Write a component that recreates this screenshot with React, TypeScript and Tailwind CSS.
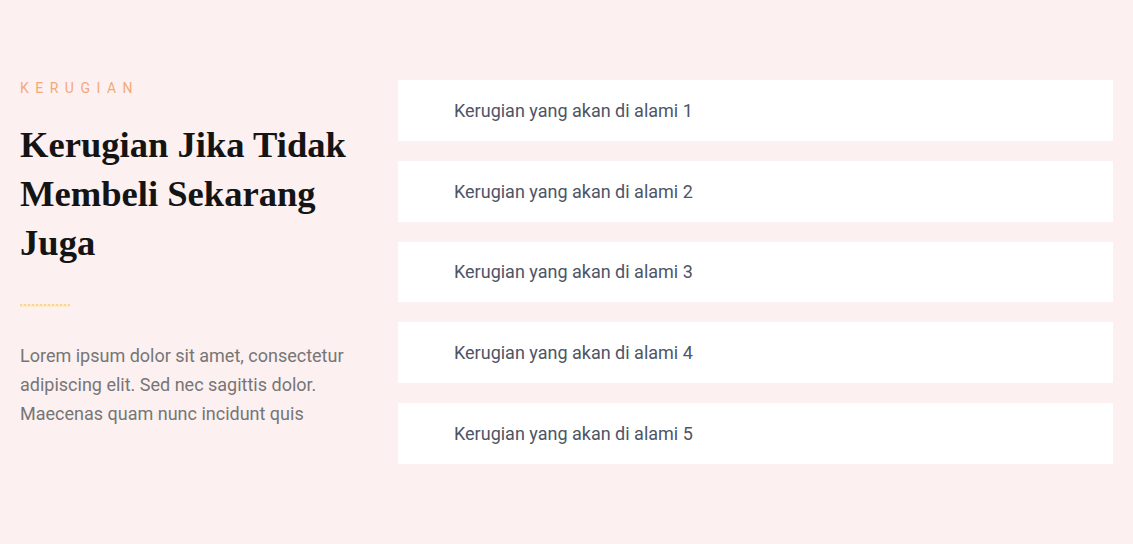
import React from 'react';

const items = [1, 2, 3, 4, 5];

export default function App() {
  return (
    <div className="min-h-screen w-full bg-[#fdf0f0] font-['Roboto',sans-serif]">
      <div className="flex px-5 pt-[80px] gap-5">
        <div className="w-[358px] shrink-0">
          <p className="text-[14px] leading-4 tracking-[6.5px] text-[#f3a978] uppercase">Kerugian</p>
          <h2 className="mt-[24px] font-['Liberation_Serif',serif] font-bold text-[36.6px] leading-[49px] text-[#141414]">
            Kerugian Jika Tidak Membeli Sekarang Juga
          </h2>
          <div className="mt-[37px] w-[50px] h-[3px] bg-[#fdeacb] border-t-2 border-dotted border-[#f8d49e]" />
          <p className="mt-[34px] text-[18px] leading-[29px] text-[#767676]">
            Lorem ipsum dolor sit amet, consectetur adipiscing elit. Sed nec sagittis dolor. Maecenas quam nunc incidunt quis
          </p>
        </div>
        <div className="flex-1 flex flex-col gap-5">
          {items.map((n) => (
            <div key={n} className="h-[60.75px] bg-white flex items-center pl-[56px]">
              <span className="text-[18px] text-[#4d5566]">Kerugian yang akan di alami {n}</span>
            </div>
          ))}
        </div>
      </div>
    </div>
  );
}
